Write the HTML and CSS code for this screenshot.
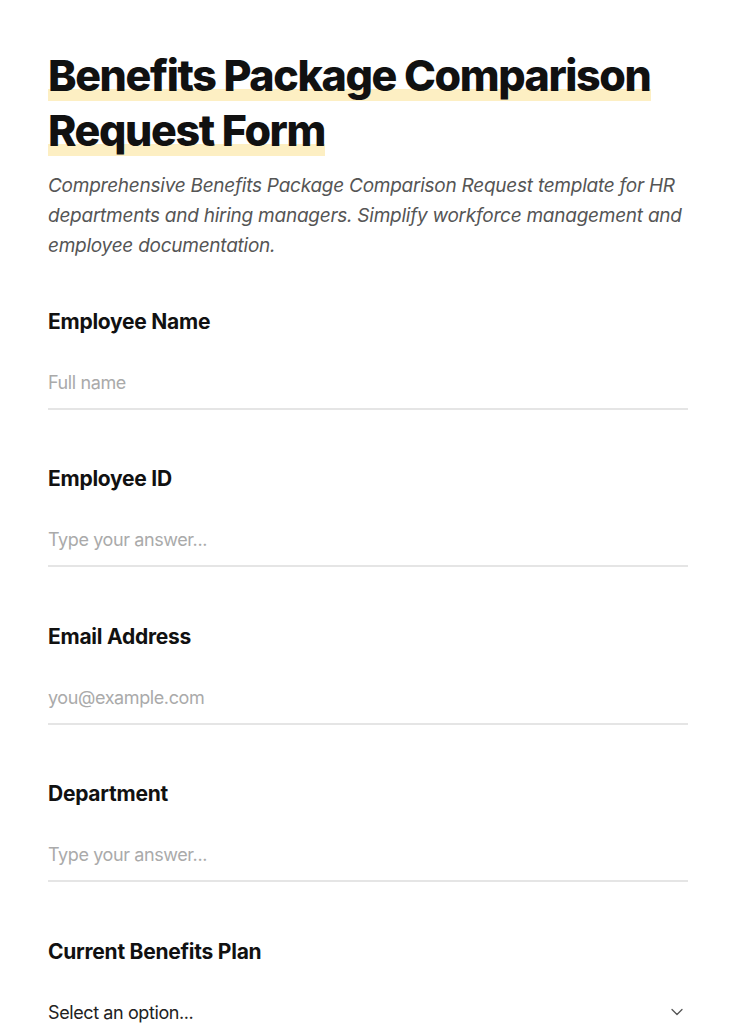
FILE: index.html
```html
<!DOCTYPE html>
<html lang="en">
<head>
<meta charset="UTF-8">
<meta name="viewport" content="width=device-width, initial-scale=1.0">
<title>Benefits Package Comparison Request Form</title>
<link rel="stylesheet" href="styles.css">
</head>
<body>
<div class="container">
    <h1 class="title"><span class="mark">Benefits Package Comparison Request Form</span></h1>
    <p class="intro">Comprehensive Benefits Package Comparison Request template for HR departments and hiring managers. Simplify workforce management and employee documentation.</p>

    <form class="form">
        <div class="field">
            <label class="label" for="name">Employee Name</label>
            <input class="input" id="name" type="text" placeholder="Full name">
        </div>
        <div class="field">
            <label class="label" for="empid">Employee ID</label>
            <input class="input" id="empid" type="text" placeholder="Type your answer...">
        </div>
        <div class="field">
            <label class="label" for="email">Email Address</label>
            <input class="input" id="email" type="email" placeholder="you@example.com">
        </div>
        <div class="field">
            <label class="label" for="dept">Department</label>
            <input class="input" id="dept" type="text" placeholder="Type your answer...">
        </div>
        <div class="field">
            <label class="label" for="plan">Current Benefits Plan</label>
            <div class="select-wrap">
                <select class="input select" id="plan">
                    <option>Select an option...</option>
                    <option>Basic</option>
                    <option>Standard</option>
                    <option>Premium</option>
                </select>
                <svg class="chevron" width="14" height="14" viewBox="0 0 14 14" fill="none">
                    <path d="M2 4.5l5 5 5-5" stroke="#555" stroke-width="1.3" stroke-linecap="round" stroke-linejoin="round"/>
                </svg>
            </div>
        </div>
    </form>
</div>
</body>
</html>
```

FILE: styles.css
```css
body {
    margin: 0;
    padding: 0;
    background-color: #fff;
    color: #111;
    font-family: 'Inter', 'Liberation Sans', sans-serif;
}
.container {
    width: 640px;
    padding: 48px 48px 0;
}
.title {
    margin: 0;
    font-size: 43px;
    font-weight: 800;
    line-height: 55px;
    letter-spacing: -1.4px;
    color: #111;
}
.mark {
    background-image: linear-gradient(#fdefc3, #fdefc3);
    background-repeat: no-repeat;
    background-size: 100% 12px;
    background-position: 0 100%;
    box-decoration-break: clone;
    -webkit-box-decoration-break: clone;
}
.intro {
    margin: 13px 0 0;
    font-size: 19px;
    font-style: italic;
    line-height: 30px;
    color: #555;
    letter-spacing: -0.25px;
}
.form {
    margin-top: 47px;
}
.field {
    margin-bottom: 55.4px;
}
.label {
    display: block;
    font-size: 21px;
    font-weight: 700;
    letter-spacing: -0.25px;
    line-height: 28px;
    color: #111;
}
.input {
    display: block;
    width: 100%;
    box-sizing: border-box;
    margin-top: 34px;
    padding: 0 0 12px;
    border: none;
    border-bottom: 2px solid #e5e5e5;
    background: transparent;
    font-family: 'Inter', 'Liberation Sans', sans-serif;
    font-size: 18px;
    line-height: 26px;
    letter-spacing: -0.4px;
    color: #111;
    outline: none;
}
.input::placeholder {
    color: #aaa;
}
.select-wrap {
    position: relative;
}
.select {
    appearance: none;
    -webkit-appearance: none;
    border-bottom: none;
    color: #222;
}
.chevron {
    position: absolute;
    right: 4px;
    top: 5px;
}
```
